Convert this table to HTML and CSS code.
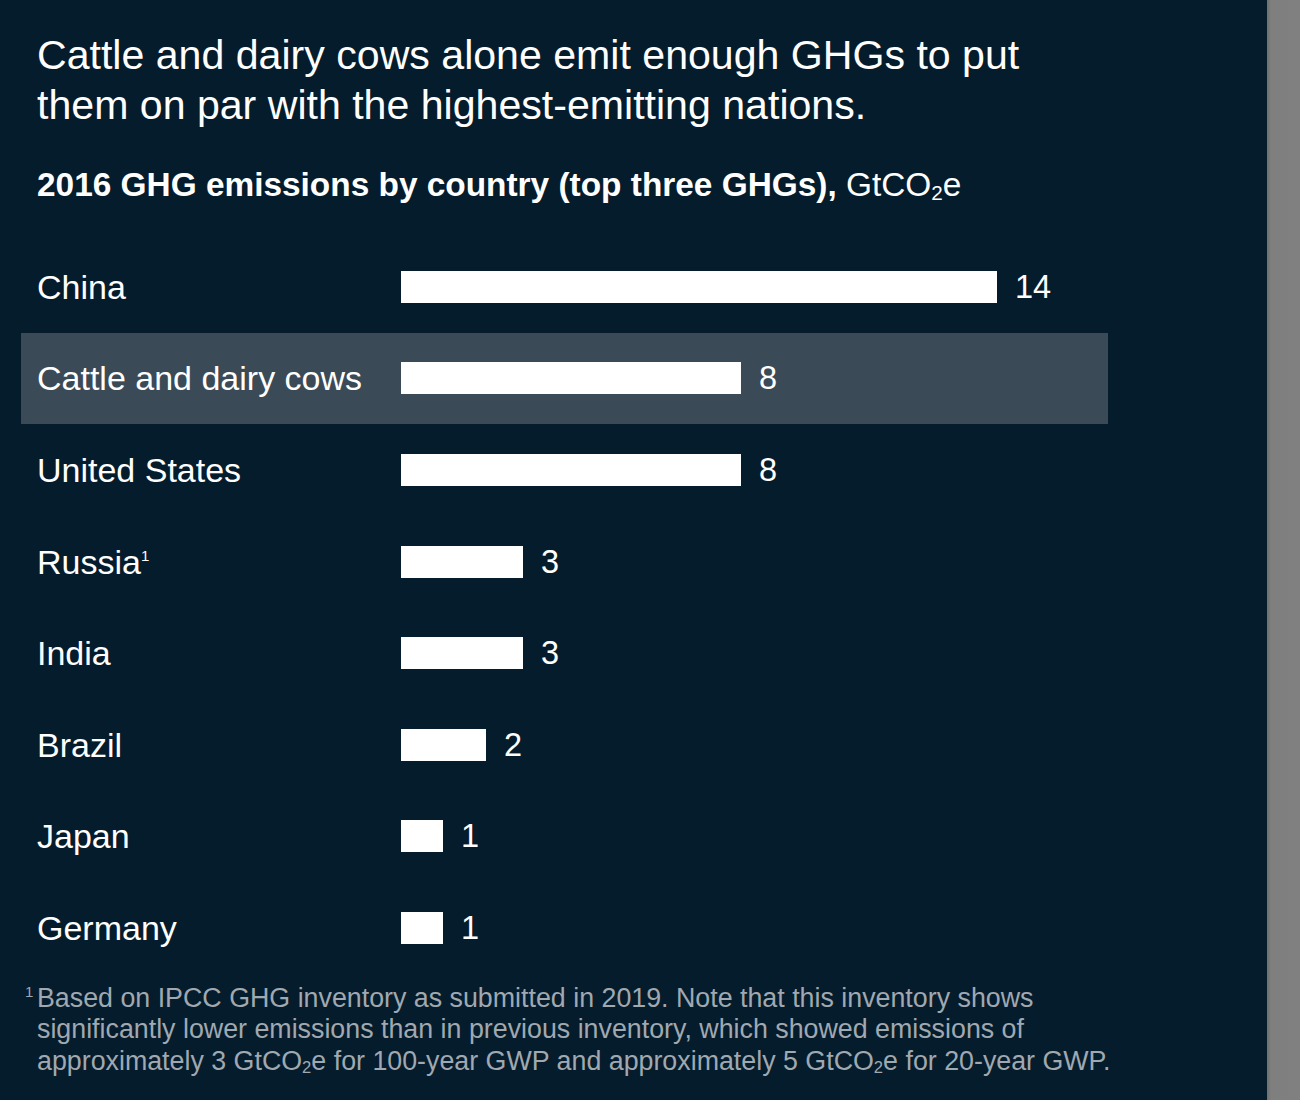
FILE: index.html
```html
<!DOCTYPE html>
<html lang="en">
<head>
<meta charset="utf-8">
<title>2016 GHG emissions by country</title>
<link rel="stylesheet" href="styles.css">
</head>
<body>
<div class="frame">
  <main class="page">
    <h1 class="title">Cattle and dairy cows alone emit enough GHGs to put<br>them on par with the highest-emitting nations.</h1>
    <h2 class="subtitle"><strong>2016 GHG emissions by country (top three GHGs),</strong> GtCO<sub>2</sub>e</h2>
    <div class="chart">
      <div class="row"><div class="label">China</div><div class="bar-wrap"><div class="bar" style="width:596px"></div><span class="value">14</span></div></div>
      <div class="row highlight"><div class="label">Cattle and dairy cows</div><div class="bar-wrap"><div class="bar" style="width:340px"></div><span class="value">8</span></div></div>
      <div class="row"><div class="label">United States</div><div class="bar-wrap"><div class="bar" style="width:340px"></div><span class="value">8</span></div></div>
      <div class="row"><div class="label">Russia<sup>1</sup></div><div class="bar-wrap"><div class="bar" style="width:122px"></div><span class="value">3</span></div></div>
      <div class="row"><div class="label">India</div><div class="bar-wrap"><div class="bar" style="width:122px"></div><span class="value">3</span></div></div>
      <div class="row"><div class="label">Brazil</div><div class="bar-wrap"><div class="bar" style="width:85px"></div><span class="value">2</span></div></div>
      <div class="row"><div class="label">Japan</div><div class="bar-wrap"><div class="bar" style="width:42px"></div><span class="value">1</span></div></div>
      <div class="row"><div class="label">Germany</div><div class="bar-wrap"><div class="bar" style="width:42px"></div><span class="value">1</span></div></div>
    </div>
    <p class="footnote"><span class="mark">1</span>Based on IPCC GHG inventory as submitted in 2019. Note that this inventory shows<br>significantly lower emissions than in previous inventory, which showed emissions of<br>approximately 3 GtCO<sub>2</sub>e for 100-year GWP and approximately 5 GtCO<sub>2</sub>e for 20-year GWP.</p>
  </main>
  <div class="edge"></div>
</div>
</body>
</html>
```
FILE: styles.css
```css
html, body {
  margin: 0;
  padding: 0;
  background: #051c2c;
}

.frame {
  display: flex;
  width: 1300px;
  height: 1100px;
  overflow: hidden;
}

.page {
  width: 1267px;
  flex: none;
  background: #051c2c;
  color: #ffffff;
  font-family: "Liberation Sans", Arial, sans-serif;
  padding: 30px 0 0 21px;
  box-sizing: border-box;
}

.edge {
  flex: 1;
  background: linear-gradient(to right, #6f6f6f 0, #7f7f7f 4px, #808080 100%);
}

.title {
  margin: 0 0 0 16px;
  font-size: 41.1px;
  line-height: 50px;
  font-weight: 400;
  white-space: nowrap;
}

.subtitle {
  margin: 35px 0 0 16px;
  font-size: 33.4px;
  line-height: 40px;
  font-weight: 400;
  white-space: nowrap;
}

.subtitle strong {
  font-weight: 700;
}

sub {
  font-size: 62%;
  vertical-align: -0.2em;
  line-height: 0;
}

.chart {
  margin-top: 36px;
  width: 1087px;
}

.row {
  display: flex;
  align-items: center;
  height: 91.6px;
  padding-left: 16px;
  box-sizing: border-box;
}

.row.highlight {
  background: #3a4a56;
}

.label {
  width: 364px;
  flex: none;
  font-size: 34px;
  line-height: 40px;
  white-space: nowrap;
}

.label sup {
  font-size: 15px;
  vertical-align: 13px;
  line-height: 0;
}

.bar-wrap {
  display: flex;
  align-items: center;
  gap: 18px;
}

.bar {
  height: 32px;
  background: #ffffff;
}

.value {
  font-size: 32.5px;
  line-height: 40px;
}

.footnote {
  margin: 9px 0 0 0;
  padding-left: 16px;
  text-indent: -12px;
  font-size: 26.8px;
  line-height: 31.5px;
  color: #a0a8b0;
  white-space: nowrap;
}

.footnote .mark {
  display: inline-block;
  width: 12px;
  text-indent: 0;
  font-size: 15px;
  line-height: 0;
  vertical-align: 10px;
}
```
